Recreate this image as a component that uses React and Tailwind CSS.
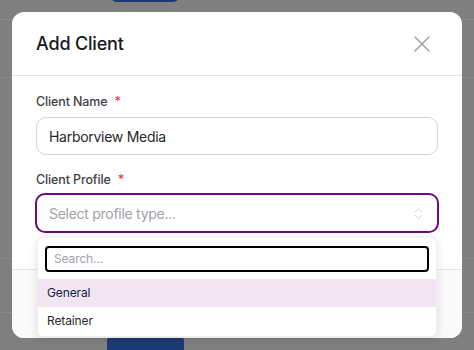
import { X, ChevronsUpDown } from 'lucide-react';

const BackgroundPage = () => (
  <div className="h-[350px] bg-[#7f7f7f] flex flex-col">
    <div className="h-[20px] relative">
      <div className="absolute left-[111px] top-[-10px] w-[68px] h-[12px] rounded-[10px] bg-[#1d3a73]" />
    </div>
    <div className="h-[60px] border-t border-[#8a8a8a]" />
    <div className="h-[189px] border-t border-[#8a8a8a]" />
    <div className="h-[56px] border-t border-[#8a8a8a]" />
    <div className="flex-1 border-t border-[#8a8a8a] pt-[17px] pl-[107px]">
      <div className="w-[77px] h-[20px] rounded-t-[12px] bg-[#1d3a73]" />
    </div>
  </div>
);

const Label = ({ children }) => (
  <label className="block h-[16px] leading-[16px] text-[12.5px] font-medium tracking-[-0.01em] text-[#3f3f46]">
    {children}
    <span className="text-red-500 ml-[7px]">*</span>
  </label>
);

export default function App() {
  return (
    <div className="relative w-[474px] h-[350px] overflow-hidden font-['Inter',sans-serif]">
      <BackgroundPage />

      {/* modal */}
      <div className="absolute left-[12px] top-[12px] w-[450px] h-[326px] bg-white rounded-xl flex flex-col">
        <div className="h-[64px] shrink-0 pl-6 pr-[26px] flex items-center justify-between border-b border-[#e4e4e7]">
          <h2 className="text-[18px] font-medium text-[#18181b] tracking-[-0.01em]">Add Client</h2>
          <button className="text-[#a1a1aa]">
            <X size={28} strokeWidth={1.25} />
          </button>
        </div>

        <div className="px-6 pt-[18px] flex flex-col">
          <Label>Client Name</Label>
          <div className="mt-[7px] h-[38px] rounded-[10px] border border-[#d4d4d8] px-3 flex items-center text-[14px] tracking-[-0.02em] text-[#27272a]">
            Harborview Media
          </div>

          <div className="mt-[17px]">
            <Label>Client Profile</Label>
          </div>
          <div className="relative mt-[5px]">
            <div className="h-[40px] -mx-px rounded-[10px] border-2 border-[#6b0b7b] pl-3 pr-[11px] flex items-center justify-between text-[14px] tracking-[-0.02em] text-[#a1a1aa]">
              <span>Select profile type...</span>
              <ChevronsUpDown size={15} strokeWidth={1.25} className="text-[#c4c4c8]" />
            </div>

            {/* dropdown */}
            <div className="absolute z-10 left-[1px] right-[1px] top-[44px] bg-white rounded-md shadow-[0_2px_8px_rgba(0,0,0,0.12)] border border-[#f0f0f0] flex flex-col pt-[8px] pb-[1px]">
              <div className="mx-[7px] h-[26px] rounded-[4px] border-2 border-black px-[7px] flex items-center text-[12px] tracking-[-0.01em] text-[#a1a1aa]">
                Search...
              </div>
              <div className="mt-[7px] h-[28px] px-[9px] flex items-center bg-[#f1e5f1] text-[12px] tracking-[-0.01em] text-[#13204a]">General</div>
              <div className="h-[28px] px-[9px] flex items-center text-[12px] tracking-[-0.01em] text-[#27272a]">Retainer</div>
            </div>
          </div>
        </div>

        <div className="mt-auto h-[69px] border-t border-[#e4e4e7] bg-[#fafafa] rounded-b-xl" />
      </div>
    </div>
  );
}
